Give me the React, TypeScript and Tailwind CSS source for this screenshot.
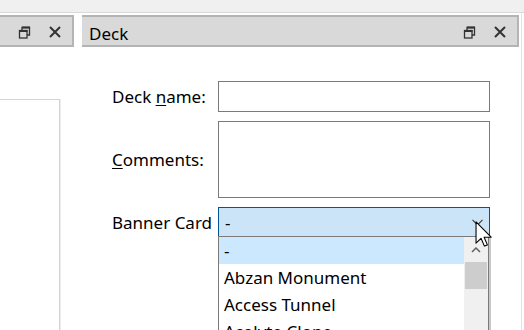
import React from 'react';

const RestoreIcon = () => (
  <svg width="13" height="13" viewBox="0 0 13 13" fill="none">
    <path d="M4 4V1.5H11.5V9H9" stroke="#333" strokeWidth="1.3" />
    <rect x="4" y="0.5" width="8" height="2" fill="#333" />
    <rect x="1.5" y="4.5" width="7.5" height="7.5" stroke="#333" strokeWidth="1.3" />
    <rect x="1" y="4" width="8.5" height="2" fill="#333" />
  </svg>
);

const CloseIcon = () => (
  <svg width="12" height="12" viewBox="0 0 12 12" fill="none">
    <path d="M1 1L11 11M11 1L1 11" stroke="#333" strokeWidth="2" />
  </svg>
);

const TitleBar = ({ title }: { title?: string }) => (
  <div className="h-[32px] bg-[#d9d9d9] border-t-2 border-r-2 border-b-2 border-[#b4b4b4] flex items-center">
    <span className="flex-1 pl-[7px] pt-[5px] text-[17px] text-black">{title}</span>
    <div className="flex items-center gap-[18px] pr-[11px] pt-[2px]">
      <RestoreIcon />
      <CloseIcon />
    </div>
  </div>
);

const Cursor = () => (
  <svg width="18" height="27" viewBox="0 0 13 20" className="absolute left-[475px] top-[221px]">
    <path
      d="M0.6 0.6V16.4L4.3 12.8L6.8 18.6L9 17.7L6.6 12H11.8Z"
      fill="#fff"
      stroke="#000"
      strokeWidth="0.8"
      strokeLinejoin="round"
    />
  </svg>
);

export default function App() {
  const items = ['-', 'Abzan Monument', 'Access Tunnel', 'Acolyte Clone'];

  return (
    <div
      className="relative w-[524px] h-[330px] overflow-hidden bg-white text-black"
      style={{ fontFamily: '"Noto Sans", "Open Sans", sans-serif' }}
    >
      <div className="h-[13px] bg-[#f0f0f0] border-b border-[#dadada]" />
      <div className="flex h-[317px]">
        {/* left panel */}
        <div className="w-[74px] pt-[2px] flex flex-col">
          <TitleBar />
          <div className="mt-[52px] w-[60px] flex-1 border-t border-r border-[#d4d4d4] shadow-[1px_0_0_#ececec]" />
        </div>

        <div className="w-[8px]" />

        {/* deck panel */}
        <div className="w-[437px] pt-[2px] flex flex-col">
          <TitleBar title="Deck" />
          <div className="pl-[30px] mt-[34px] flex flex-col gap-[9px] text-[17px]">
            <div className="flex items-center">
              <span className="w-[106px] pt-[1px]">
                Deck <u className="underline-offset-2">n</u>ame:
              </span>
              <div className="w-[272px] h-[31px] border border-[#7a7a7a] bg-white" />
            </div>
            <div className="flex items-center">
              <span className="w-[106px] pt-[1px]">
                <u className="underline-offset-2">C</u>omments:
              </span>
              <div className="w-[272px] h-[77px] border border-[#7a7a7a] bg-white" />
            </div>
            <div className="flex items-center">
              <span className="w-[106px] pt-[2px]">Banner Card</span>
              <div className="relative w-[272px] h-[30px] border border-[#005499] bg-[#cce4f7] flex items-center justify-between pl-[6px] pr-[6px]">
                <span className="leading-none">-</span>
                <svg width="11" height="7" viewBox="0 0 11 7" fill="none">
                  <path d="M0.5 0.8L5.5 5.8L10.5 0.8" stroke="#404040" strokeWidth="1.2" />
                </svg>

                {/* open list */}
                <div className="absolute left-[-1px] top-[28px] w-[271px] h-[120px] border border-[#7a7a7a] bg-white flex shadow-[2px_0_0_#c8c8c8]">
                  <div className="flex-1 flex flex-col">
                    {items.map((item, i) => (
                      <div
                        key={item}
                        className={
                          'h-[27px] flex items-center pl-[5px] ' + (i === 0 ? 'bg-[#cce8ff]' : '')
                        }
                      >
                        {item}
                      </div>
                    ))}
                  </div>
                  <div className="w-[24px] bg-[#f0f0f0] flex flex-col items-center">
                    <div className="h-[25px] flex items-center justify-center">
                      <svg width="10" height="6" viewBox="0 0 10 6" fill="none">
                        <path d="M1 5L5 1L9 5" stroke="#606060" strokeWidth="1.5" />
                      </svg>
                    </div>
                    <div className="w-[22px] h-[27px] bg-[#cdcdcd]" />
                  </div>
                </div>
              </div>
            </div>
          </div>
        </div>

        <div className="w-[2px]" />
        <div className="w-px bg-[#e3e3e3]" />
      </div>
      <Cursor />
    </div>
  );
}
